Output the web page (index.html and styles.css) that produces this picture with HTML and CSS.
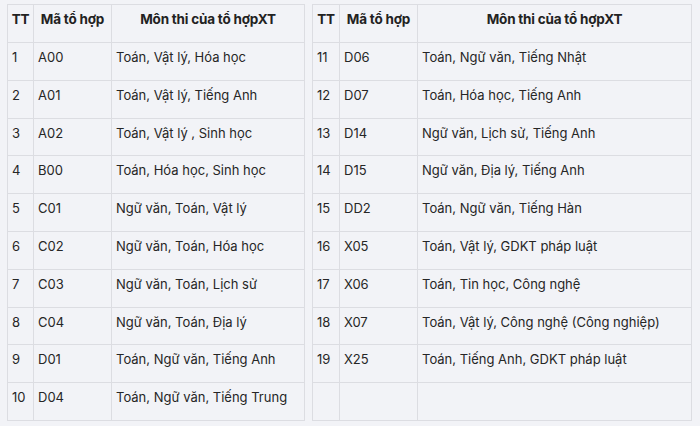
FILE: index.html
```html
<!DOCTYPE html>
<html lang="vi">
<head>
<meta charset="utf-8">
<link rel="stylesheet" href="styles.css">
</head>
<body>
<div class="wrap">
  <table class="tbl tbl-left">
    <colgroup><col class="c-tt"><col class="c-ma"><col class="c-mon"></colgroup>
    <thead>
      <tr><th>TT</th><th>Mã tổ hợp</th><th>Môn thi của tổ hợpXT</th></tr>
    </thead>
    <tbody>
      <tr><td>1</td><td>A00</td><td>Toán, Vật lý, Hóa học</td></tr>
      <tr><td>2</td><td>A01</td><td>Toán, Vật lý, Tiếng Anh</td></tr>
      <tr><td>3</td><td>A02</td><td>Toán, Vật lý , Sinh học</td></tr>
      <tr><td>4</td><td>B00</td><td>Toán, Hóa học, Sinh học</td></tr>
      <tr><td>5</td><td>C01</td><td>Ngữ văn, Toán, Vật lý</td></tr>
      <tr><td>6</td><td>C02</td><td>Ngữ văn, Toán, Hóa học</td></tr>
      <tr><td>7</td><td>C03</td><td>Ngữ văn, Toán, Lịch sử</td></tr>
      <tr><td>8</td><td>C04</td><td>Ngữ văn, Toán, Địa lý</td></tr>
      <tr><td>9</td><td>D01</td><td>Toán, Ngữ văn, Tiếng Anh</td></tr>
      <tr><td>10</td><td>D04</td><td>Toán, Ngữ văn, Tiếng Trung</td></tr>
    </tbody>
  </table>
  <table class="tbl tbl-right">
    <colgroup><col class="c-tt2"><col class="c-ma"><col class="c-mon"></colgroup>
    <thead>
      <tr><th>TT</th><th>Mã tổ hợp</th><th>Môn thi của tổ hợpXT</th></tr>
    </thead>
    <tbody>
      <tr><td>11</td><td>D06</td><td>Toán, Ngữ văn, Tiếng Nhật</td></tr>
      <tr><td>12</td><td>D07</td><td>Toán, Hóa học, Tiếng Anh</td></tr>
      <tr><td>13</td><td>D14</td><td>Ngữ văn, Lịch sử, Tiếng Anh</td></tr>
      <tr><td>14</td><td>D15</td><td>Ngữ văn, Địa lý, Tiếng Anh</td></tr>
      <tr><td>15</td><td>DD2</td><td>Toán, Ngữ văn, Tiếng Hàn</td></tr>
      <tr><td>16</td><td>X05</td><td>Toán, Vật lý, GDKT pháp luật</td></tr>
      <tr><td>17</td><td>X06</td><td>Toán, Tin học, Công nghệ</td></tr>
      <tr><td>18</td><td>X07</td><td>Toán, Vật lý, Công nghệ (Công nghiệp)</td></tr>
      <tr><td>19</td><td>X25</td><td>Toán, Tiếng Anh, GDKT pháp luật</td></tr>
      <tr><td></td><td></td><td></td></tr>
    </tbody>
  </table>
</div>
</body>
</html>
```

FILE: styles.css
```css
html, body {
  margin: 0;
  padding: 0;
  background: #f2f3f7;
}
body {
  font-family: Inter, "Noto Sans", "Liberation Sans", sans-serif;
  color: #262626;
  font-size: 13px;
}
.wrap {
  display: flex;
  align-items: flex-start;
  gap: 7px;
  padding: 4px 0 0 7px;
}
.tbl {
  border-collapse: collapse;
  table-layout: fixed;
}
.tbl-left { width: 298px; }
.tbl-right { width: 380px; }
.c-tt { width: 26px; }
.c-tt2 { width: 27px; }
.c-ma { width: 78px; }
.tbl th, .tbl td {
  border: 1px solid #dcdde2;
  padding: 4px 4px 0 4px;
  vertical-align: top;
  text-align: left;
  line-height: 20px;
  white-space: nowrap;
  overflow: hidden;
}
.tbl th {
  font-weight: 700;
  font-size: 13.5px;
  text-align: center;
  height: 38px;
  box-sizing: border-box;
  padding: 4px 2px 0 2px;
  color: #222222;
  letter-spacing: -0.2px;
}
.tbl td {
  height: 37.8px;
  box-sizing: border-box;
}
```
